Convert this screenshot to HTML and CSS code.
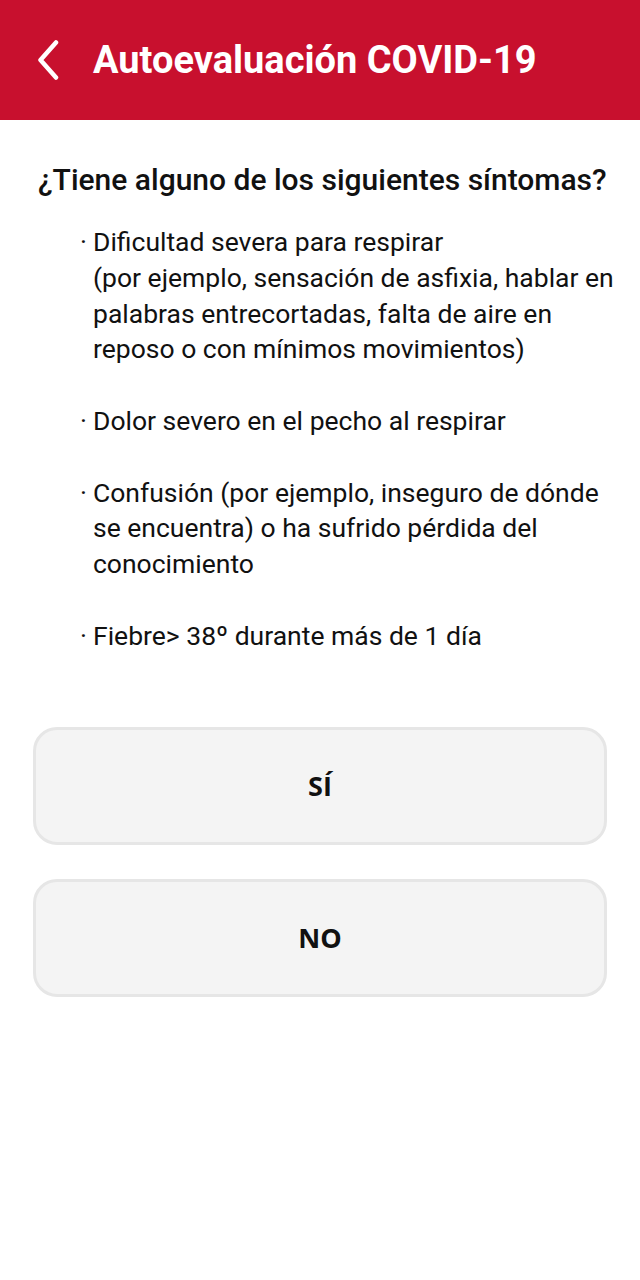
FILE: index.html
```html
<!DOCTYPE html>
<html lang="es">
<head>
<meta charset="utf-8">
<title>Autoevaluación COVID-19</title>
<link rel="stylesheet" href="styles.css">
</head>
<body>
<header class="appbar">
  <svg class="back" width="24" height="40" viewBox="0 0 24 40" aria-hidden="true">
    <path d="M20 2.5 L4.5 20 L20 37.5" fill="none" stroke="#fff" stroke-width="4.5" stroke-linecap="round" stroke-linejoin="round"/>
  </svg>
  <h1 class="title">Autoevaluación COVID-19</h1>
</header>
<main class="content">
  <h2 class="question">¿Tiene alguno de los siguientes síntomas?</h2>
  <ul class="symptoms">
    <li><span class="dot">·</span><span class="txt">Dificultad severa para respirar<br>(por ejemplo, sensación de asfixia, hablar en palabras entrecortadas, falta de aire en reposo o con mínimos movimientos)</span></li>
    <li><span class="dot">·</span><span class="txt">Dolor severo en el pecho al respirar</span></li>
    <li><span class="dot">·</span><span class="txt">Confusión (por ejemplo, inseguro de dónde se encuentra) o ha sufrido pérdida del conocimiento</span></li>
    <li><span class="dot">·</span><span class="txt">Fiebre&gt; 38º durante más de 1 día</span></li>
  </ul>
  <div class="answers">
    <button class="answer">SÍ</button>
    <button class="answer">NO</button>
  </div>
</main>
</body>
</html>
```
FILE: styles.css
```css
html, body {
  margin: 0;
  padding: 0;
  background: #fff;
}
body {
  width: 640px;
  font-family: Roboto, "Noto Sans", sans-serif;
  color: #111;
}
.appbar {
  height: 120px;
  background: #c8102e;
  display: flex;
  align-items: center;
  padding-left: 36px;
  box-sizing: border-box;
}
.back {
  flex: none;
  margin-top: -1px;
}
.title {
  margin: 0 0 0 33px;
  color: #fff;
  font-size: 38px;
  font-weight: 700;
}
.content {
  padding: 0 20px 0 33px;
}
.question {
  margin: 42px 0 0 5px;
  font-size: 30px;
  font-weight: 500;
  line-height: 36px;
  white-space: nowrap;
}
.symptoms {
  list-style: none;
  margin: 26px 0 0 47px;
  padding: 0;
  font-size: 26.5px;
  line-height: 35.8px;
}
.symptoms li {
  display: flex;
  margin-bottom: 35.8px;
}
.symptoms li:last-child {
  margin-bottom: 0;
}
.dot {
  flex: none;
  width: 13px;
}
.txt {
  flex: 1;
}
.answers {
  margin: 73px 0 0;
  width: 574px;
  display: flex;
  flex-direction: column;
  gap: 34px;
}
.answer {
  height: 118px;
  border: 3px solid #e6e6e6;
  border-radius: 24px;
  background: #f4f4f4;
  font-family: "Open Sans", sans-serif;
  font-size: 27px;
  font-weight: 700;
  color: #111;
}
```
